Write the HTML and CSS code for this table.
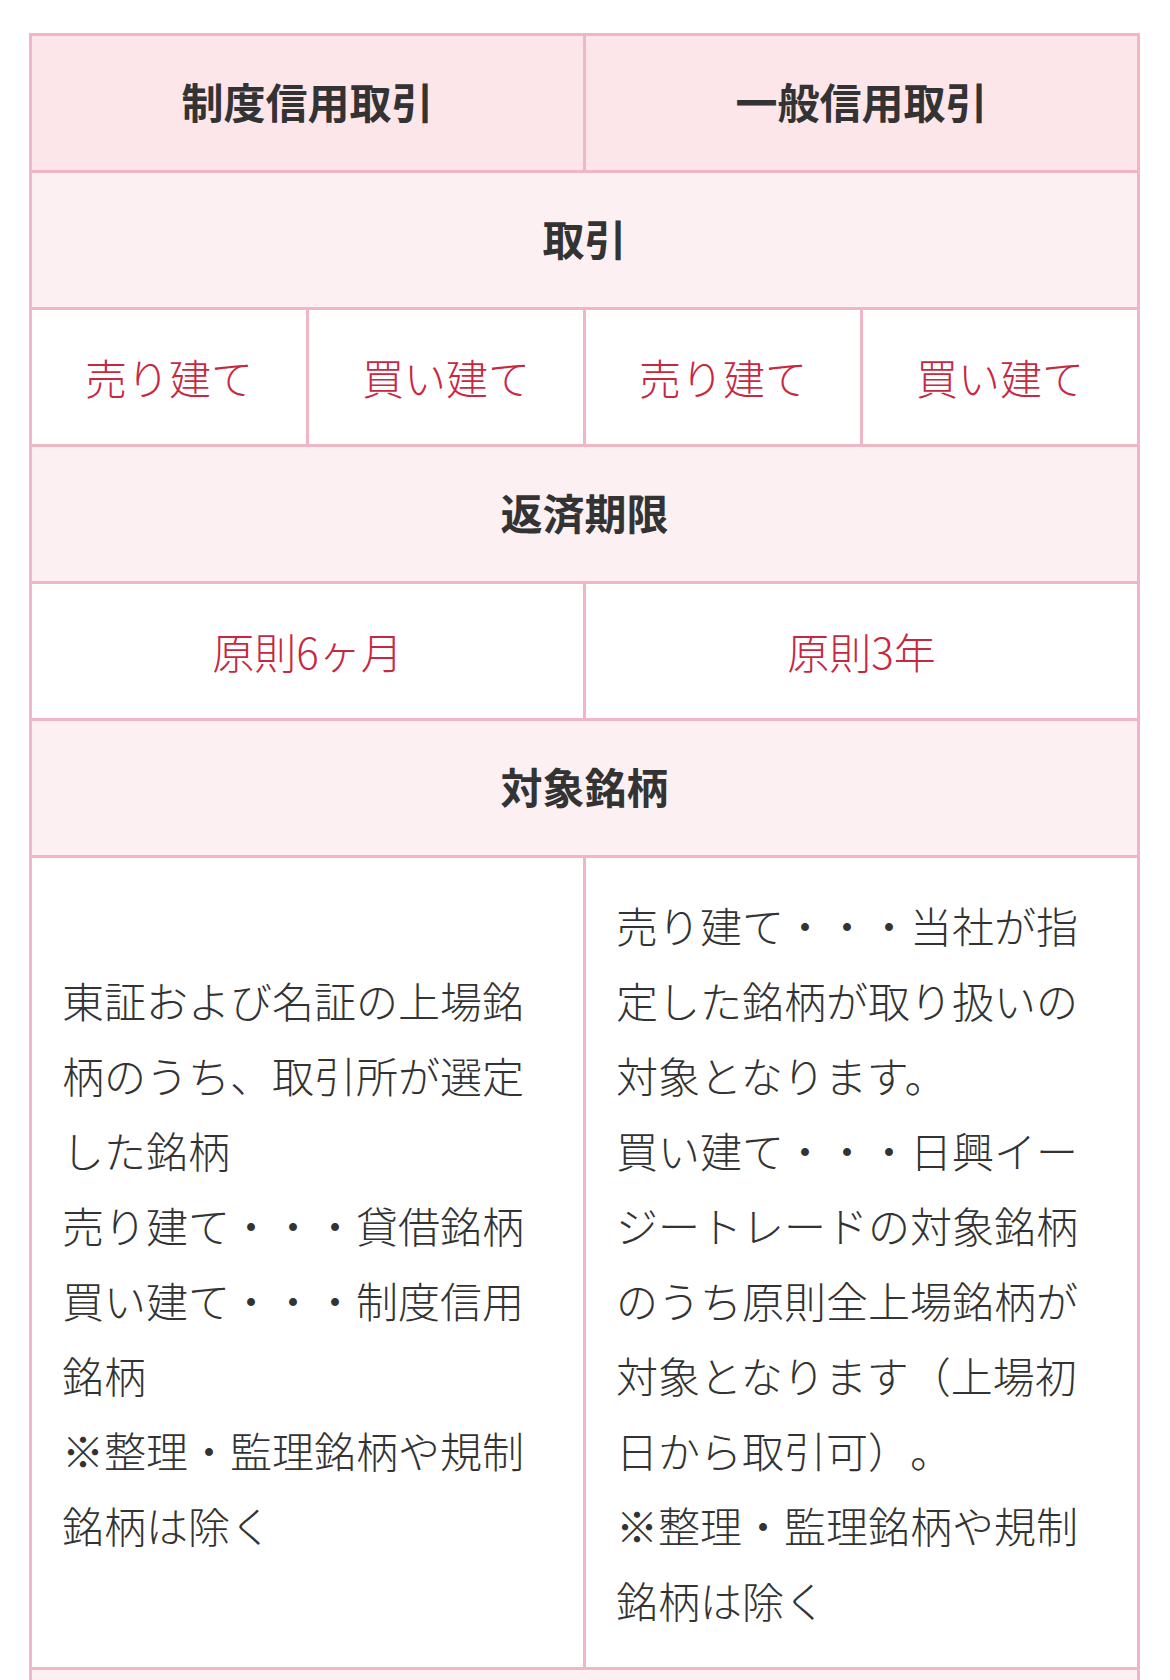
FILE: index.html
```html
<!DOCTYPE html>
<html lang="ja">
<head>
<meta charset="utf-8">
<title>制度信用取引と一般信用取引</title>
<link rel="stylesheet" href="styles.css">
</head>
<body>
<table class="compare">
  <colgroup>
    <col class="q"><col class="q"><col class="q"><col class="q">
  </colgroup>
  <tbody>
    <tr class="head">
      <th colspan="2">制度信用取引</th>
      <th colspan="2">一般信用取引</th>
    </tr>
    <tr class="sub">
      <th colspan="4">取引</th>
    </tr>
    <tr class="val">
      <td>売り建て</td>
      <td>買い建て</td>
      <td>売り建て</td>
      <td>買い建て</td>
    </tr>
    <tr class="sub">
      <th colspan="4">返済期限</th>
    </tr>
    <tr class="val">
      <td colspan="2">原則6ヶ月</td>
      <td colspan="2">原則3年</td>
    </tr>
    <tr class="sub">
      <th colspan="4">対象銘柄</th>
    </tr>
    <tr class="text">
      <td colspan="2">東証および名証の上場銘柄のうち、取引所が選定した銘柄<br>売り建て・・・貸借銘柄<br>買い建て・・・制度信用銘柄<br>※整理・監理銘柄や規制銘柄は除く</td>
      <td colspan="2">売り建て・・・当社が指定した銘柄が取り扱いの対象となります。<br>買い建て・・・日興イージートレードの対象銘柄のうち原則全上場銘柄が対象となります（上場初日から取引可）。<br>※整理・監理銘柄や規制銘柄は除く</td>
    </tr>
    <tr class="sub">
      <th colspan="4">&nbsp;</th>
    </tr>
  </tbody>
</table>
</body>
</html>
```

FILE: styles.css
```css
html, body {
  margin: 0;
  padding: 0;
  background: #ffffff;
}

body {
  padding: 33px 30px 0 29px;
  font-family: "Noto Sans CJK JP", "Noto Sans", sans-serif;
  color: #333333;
}

.compare {
  width: 1111px;
  table-layout: fixed;
  border-collapse: separate;
  border-spacing: 0;
  border-top: 3px solid #f1b6c6;
  border-left: 3px solid #f1b6c6;
}

.compare th,
.compare td {
  border-right: 3px solid #f1b6c6;
  border-bottom: 3px solid #f1b6c6;
  padding: 29px 30px 30px;
  font-size: 42px;
  line-height: 75px;
  text-align: center;
  vertical-align: middle;
  text-spacing-trim: space-all;
}

.compare th {
  font-weight: 700;
  color: #333333;
  padding-top: 27px;
  padding-bottom: 32px;
}

.head th {
  background: #fce6ea;
}

.sub th {
  background: #fcf0f3;
}

.val td {
  background: #ffffff;
  color: #c7283f;
  font-weight: 300;
  padding-left: 0;
  padding-right: 0;
}

.text td {
  background: #ffffff;
  color: #333333;
  text-align: left;
  font-weight: 300;
  line-break: strict;
}
```
